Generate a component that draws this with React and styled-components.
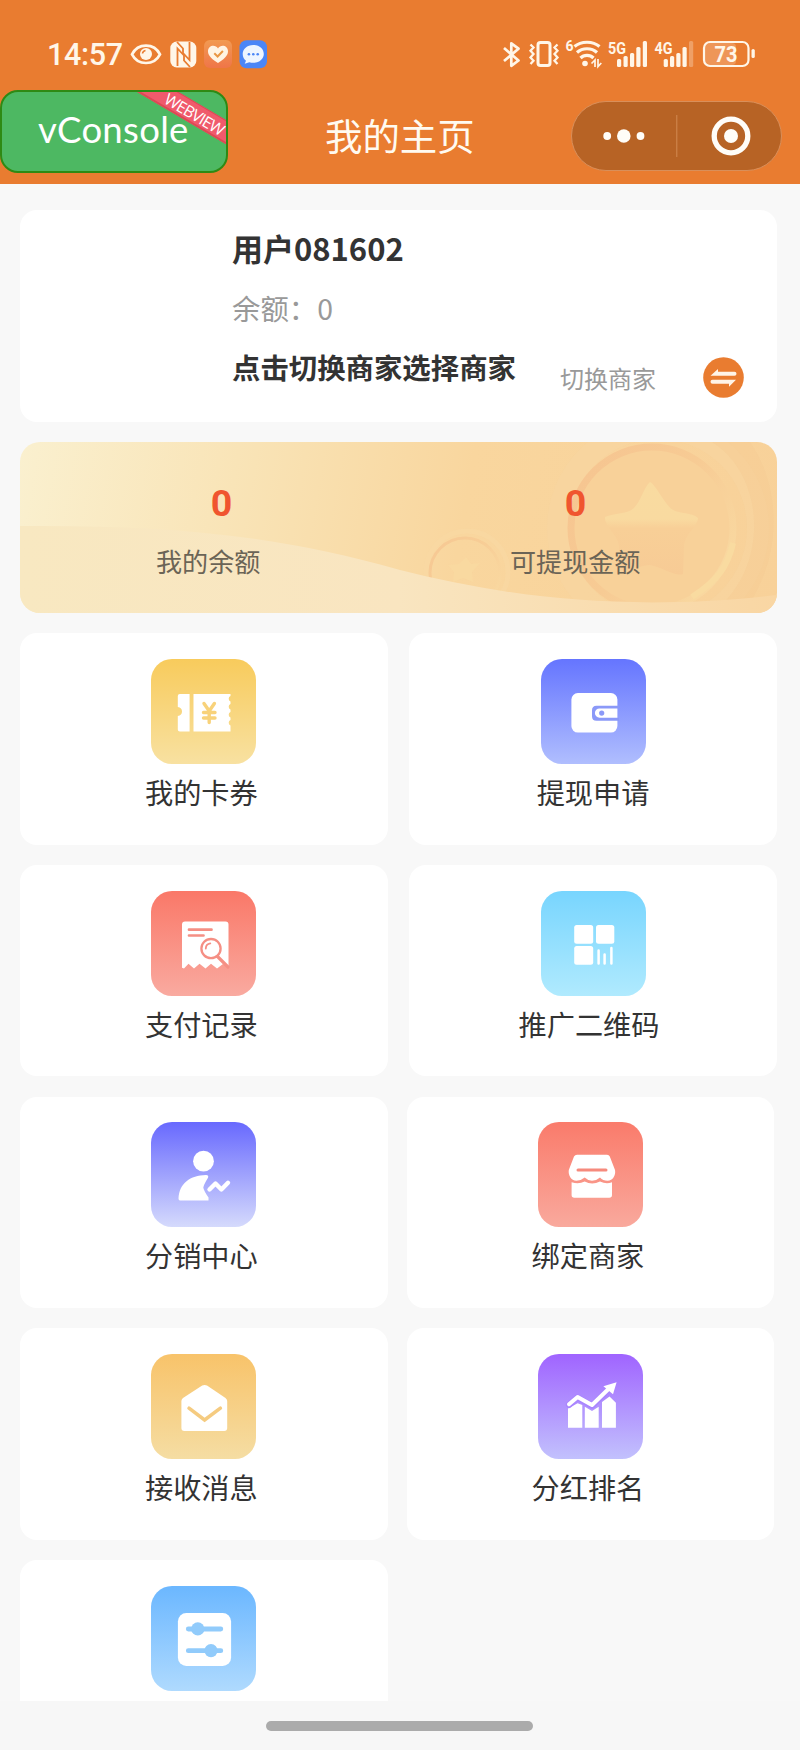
import React from 'react';
import styled, { createGlobalStyle } from 'styled-components';

const GlobalStyle = createGlobalStyle`
  * { box-sizing: border-box; }
  body { margin: 0; background: #f8f8f8; font-family: "Noto Sans CJK SC", sans-serif; color: #333; }
  svg { display: block; flex: none; }
`;

const Screen = styled.div`
  width: 800px;
  height: 1750px;
  overflow: hidden;
  display: flex;
  flex-direction: column;
  background: #f8f8f8;
`;

const Header = styled.header`
  height: 183.5px;
  flex: none;
  background: #e97c30;
`;

const StatusBar = styled.div`
  height: 90px;
  padding: 18px 43px 0 47px;
  display: flex;
  align-items: center;
  justify-content: space-between;
  color: #fff6e8;
`;

const StatusGroup = styled.div`
  display: flex;
  align-items: center;
  gap: 8px;
`;

const Clock = styled.span`
  width: 75px;
  padding-top: 2px;
  font: 500 30.5px/36px Roboto, sans-serif;
  letter-spacing: -0.3px;
  white-space: nowrap;
`;

const NavBar = styled.div`
  height: 93px;
  padding-right: 18.5px;
  display: grid;
  grid-template-columns: 228px 1fr 210px;
  align-items: start;
`;

const ConsoleButton = styled.div`
  position: relative;
  height: 83px;
  border: 2px solid #2e8a14;
  border-radius: 18px;
  overflow: hidden;
  background: #4db862;
  color: #fff;
  font: 400 36.5px/75px Lato, sans-serif;
  padding-left: 36px;
  letter-spacing: 0.3px;
`;

const Ribbon = styled.span`
  position: absolute;
  left: 119px;
  top: 12px;
  width: 150px;
  height: 21px;
  background: #f05a6c;
  border: solid #dc4a55;
  border-width: 1px 0 2px;
  transform: rotate(30.5deg);
  font: 400 16px/20px "Open Sans", sans-serif;
  text-align: center;
  letter-spacing: -0.8px;
  padding-right: 3px;
`;

const Title = styled.h1`
  margin: 0;
  padding-left: 97px;
  font-size: 37.4px;
  font-weight: 400;
  line-height: 90px;
  color: #fffaf0;
  white-space: nowrap;
`;

const Capsule = styled.div`
  margin-top: 11px;
  margin-left: -1px;
  height: 70px;
  border: 1px solid #d98f5a;
  border-radius: 35px;
  background: #b76325;
`;

const Content = styled.main`
  flex: none;
  height: 1517.5px;
  overflow: hidden;
  padding: 26.5px 23px 0 20px;
  display: flex;
  flex-direction: column;
  gap: 20.3px;
`;

const UserCard = styled.section`
  flex: none;
  height: 212px;
  border-radius: 17px;
  background: #fff;
  padding: 16px 33px 0 212px;
  display: flex;
  justify-content: space-between;
`;

const UserInfo = styled.div`
  display: flex;
  flex-direction: column;
  white-space: nowrap;
`;

const UserName = styled.div`
  font-size: 31px;
  font-weight: 700;
  line-height: 44px;
  height: 61px;
`;

const Balance = styled.div`
  font-size: 28.4px;
  line-height: 42px;
  height: 59px;
  color: #999;
`;

const Merchant = styled.div`
  font-size: 28.4px;
  font-weight: 700;
  line-height: 42px;
`;

const SwitchMerchant = styled.div`
  display: flex;
  align-items: center;
  gap: 47px;
  height: 40px;
  margin-top: 132px;
  font-size: 24px;
  line-height: 40px;
  color: #999;
`;

const Banner = styled.section`
  position: relative;
  flex: none;
  height: 170.5px;
  border-radius: 20px;
  overflow: hidden;
  padding: 34px 136px 0;
  display: flex;
  justify-content: space-between;
  background: linear-gradient(100deg, #faf0cf 0%, #f9e4b7 28%, #f9d69e 58%, #f8d199 100%);
`;

const BannerArt = styled.svg`
  position: absolute;
  inset: 0;
`;

const Amount = styled.div`
  position: relative;
  width: 131px;
`;

const AmountValue = styled.div`
  text-align: center;
  font: 700 37.5px/54px Roboto, sans-serif;
  color: #f0552f;
`;

const AmountLabel = styled.div`
  font-size: 26.1px;
  line-height: 38px;
  margin-top: 12px;
  color: #6b6456;
  white-space: nowrap;
`;

const TileRow = styled.div`
  flex: none;
  display: flex;
  gap: ${(p) => p.$gap}px;
`;

const Tile = styled.div`
  width: 367.7px;
  height: 211.5px;
  border-radius: 17px;
  background: #fff;
  padding-top: 25.8px;
  display: flex;
  flex-direction: column;
  align-items: center;
`;

const TileIcon = styled.div`
  width: 105px;
  height: 105px;
  border-radius: 21px;
  background: linear-gradient(${(p) => p.$from}, ${(p) => p.$to});
`;

const TileLabel = styled.div`
  margin-top: 8px;
  padding-right: ${(p) => p.$inset}px;
  font-size: 28.2px;
  line-height: 40px;
`;

const HomeArea = styled.footer`
  flex: 1;
  padding: 20px 0 0 266px;
  background: #f7f7f7;
`;

const HomeIndicator = styled.div`
  width: 266.5px;
  height: 9.5px;
  border-radius: 5px;
  background: #ababab;
`;

const NotificationIcons = () => (
  <svg width="138" height="30" viewBox="130 39 138 30">
    <defs>
      <linearGradient id="heartBg" x1="0" y1="0" x2="0" y2="1">
        <stop offset="0" stopColor="#f29a52" />
        <stop offset="1" stopColor="#ef7548" />
      </linearGradient>
    </defs>
    <path d="M132 54.3C138 42.7 154 42.7 160 54.3C154 65.9 138 65.9 132 54.3Z" fill="none" stroke="#fff6e8" strokeWidth="2.7" />
    <circle cx="146" cy="54" r="6" fill="#fff6e8" />
    <path d="M142.5 53.5a3.6 3.6 0 0 1 3-3" fill="none" stroke="#e97c30" strokeWidth="1.6" />
    <rect x="170.3" y="41.5" width="26" height="26" rx="6.5" fill="#fff6e8" />
    <path d="M177.5 66V48.5L184 55.5V60.5L190 67" fill="none" stroke="#e97c30" strokeWidth="1.8" />
    <path d="M177 42L183 48.5V53L189.5 60V42" fill="none" stroke="#e97c30" strokeWidth="1.8" />
    <rect x="204" y="40" width="28" height="28" rx="6" fill="url(#heartBg)" />
    <path d="M218 63C213 60 208 56 208 51.5C208 45 215.5 44 218 48.5C220.5 44 228 45 228 51.5C228 56 223 60 218 63Z" fill="#fff4e4" />
    <path d="M214.3 53.3l3.3 3.2 5.3-5.5" fill="none" stroke="#e99745" strokeWidth="2" />
    <rect x="239.5" y="40.3" width="27.5" height="28" rx="7" fill="#4b86f7" />
    <path d="M253.3 45C247 45 242.7 49 242.7 54C242.7 57 244 59.3 246 60.8L244.7 63.7L249.3 62.3C257 64.5 263.8 60 263.8 54C263.8 49 259.5 45 253.3 45Z" fill="#eef5ff" />
    <g fill="#4b86f7">
      <circle cx="248.9" cy="54.3" r="1.3" /><circle cx="253.3" cy="54.3" r="1.3" /><circle cx="257.7" cy="54.3" r="1.3" />
    </g>
  </svg>
);

const SystemIcons = () => (
  <svg width="256" height="44" viewBox="501 32 256 44" fill="none" stroke="#fff6e8">
    <path d="M504 48L518.5 60.5L511.3 65.8V43.3L518.5 48.7L504 61" strokeWidth="2.7" strokeLinejoin="round" />
    <rect x="538" y="42.6" width="12" height="23" rx="2.5" strokeWidth="3" />
    <path d="M530.5 44.5l3 3-3 3.3 3 3.3-3 3.3 3 3.3-3 3.3M557.5 44.5l-3 3 3 3.3-3 3.3 3 3.3-3 3.3 3 3.3" strokeWidth="2.3" />
    <path d="M574.5 46.5C581 40.8 593 40.8 599.5 46.5M577 52.5C582.5 47.5 591.5 47.5 597 52.5M580.5 58C584 54.5 590 54.5 593.5 58" strokeWidth="3.2" />
    <circle cx="585" cy="63.5" r="2.8" fill="#fff6e8" stroke="none" />
    <path d="M591.5 63.5L595 60V67M598 59V66.5L601.3 63" strokeWidth="1.7" />
    <g fill="#fff6e8" stroke="none">
      <text x="565.6" y="51" fontFamily="Roboto" fontWeight="700" fontSize="14">6</text>
      <text x="608" y="53.5" fontFamily="Roboto" fontWeight="700" fontSize="16.5" textLength="18" lengthAdjust="spacingAndGlyphs">5G</text>
      <text x="654.5" y="53.5" fontFamily="Roboto" fontWeight="700" fontSize="16.5" textLength="18" lengthAdjust="spacingAndGlyphs">4G</text>
      <rect x="617" y="59" width="4.2" height="8" rx="1.5" />
      <rect x="623.5" y="56" width="4.2" height="11" rx="1.5" />
      <rect x="630" y="53" width="4.2" height="14" rx="1.5" />
      <rect x="636.3" y="47" width="4.2" height="20" rx="1.5" />
      <rect x="642.8" y="41" width="4.2" height="26" rx="1.5" />
      <rect x="663.7" y="59" width="4.2" height="8" rx="1.5" />
      <rect x="670" y="56" width="4.2" height="11" rx="1.5" />
      <rect x="676.3" y="53" width="4.2" height="14" rx="1.5" />
      <rect x="682.5" y="47" width="4.2" height="20" rx="1.5" />
      <rect x="689" y="41" width="4.2" height="26" rx="1.5" opacity=".3" />
      <rect x="705" y="43" width="31" height="22" rx="4" opacity=".22" />
      <rect x="751.5" y="49" width="3.3" height="9" rx="1.6" />
      <text x="714.5" y="61.7" fontFamily="Roboto" fontWeight="700" fontSize="22" textLength="23" lengthAdjust="spacingAndGlyphs">73</text>
    </g>
    <rect x="704" y="42" width="44.5" height="24" rx="6" strokeWidth="2.2" />
  </svg>
);

const CapsuleIcons = () => (
  <svg width="208" height="68" viewBox="571.5 102 208 68">
    <g fill="#fffdf8">
      <circle cx="606.7" cy="136" r="3.9" /><circle cx="623.3" cy="136" r="6.8" /><circle cx="640" cy="136" r="3.9" />
      <circle cx="730.5" cy="136" r="7" />
    </g>
    <path d="M676.3 115V157" stroke="#d28a52" />
    <circle cx="730.5" cy="136" r="16.8" fill="none" stroke="#fffdf8" strokeWidth="5.3" />
  </svg>
);

const SwitchIcon = () => (
  <svg width="41" height="42" viewBox="0 0 41 42">
    <circle cx="20.5" cy="20.5" r="20.3" fill="#e97c30" />
    <g fill="#fff4e8">
      <path d="M7.5 18.8L15 12V14.8H31.5a2 2 0 0 1 0 4Z" />
      <path d="M33 22.7L26 29.8V26.7H9.5a2 2 0 0 1 0-4Z" />
    </g>
  </svg>
);

const CoinArt = () => (
  <BannerArt width="757" height="171" viewBox="20 442 757 171" fill="none">
    <defs>
      <linearGradient id="star" x1="0" y1="0" x2="0" y2="1">
        <stop offset="0" stopColor="#f9dba0" />
        <stop offset=".4" stopColor="#f9daa0" />
        <stop offset=".5" stopColor="#f8cf97" />
        <stop offset="1" stopColor="#f7cb95" />
      </linearGradient>
      <linearGradient id="wave">
        <stop offset="0" stopColor="#f8e8c1" />
        <stop offset=".5" stopColor="#f9e5c0" />
        <stop offset="1" stopColor="#f9d6a3" />
      </linearGradient>
      <linearGradient id="ring" x1="0" y1="0" x2="1" y2=".7">
        <stop offset="0" stopColor="#f6c490" />
        <stop offset=".55" stopColor="#f7cb94" />
        <stop offset="1" stopColor="#f9d8a0" />
      </linearGradient>
    </defs>
    <circle cx="658" cy="528" r="100" stroke="#f8d6a1" strokeWidth="22" opacity=".5" />
    <path d="M712 442C765 475 770 565 716 610L749 604C784 550 779 484 750 442Z" fill="#f6cb94" opacity=".5" />
    <circle cx="652" cy="528" r="81" fill="#f8d199" stroke="url(#ring)" strokeWidth="7" />
    <path d="M692 597C718 580 728 566 733 543" stroke="#f9dba0" strokeWidth="6" />
    <path d="M650 482C656 485 665 505 673 510C680 514 691 512 698 518C698 526 684 535 684 547L683 574C675 577 662 567 650 565C640 565 630 573 620 569L619 545C617 534 604 526 605 517C614 513 628 514 634 508C641 501 644 487 650 482Z" fill="url(#star)" />
    <circle cx="467" cy="572" r="41" stroke="#f8d8a4" strokeWidth="5" opacity=".6" />
    <circle cx="465" cy="573" r="35" stroke="url(#ring)" strokeWidth="3" opacity=".8" />
    <path d="M448 565l11-1 7-7 5 7 9-1-8 9 1 10-10-4-10 4 1-10Z" fill="#f9daa1" opacity=".7" />
    <path d="M20 526C160 525 270 533 400 570C510 598 630 612 777 595V613H20Z" fill="url(#wave)" />
  </BannerArt>
);

const TicketIcon = ({ tint }) => (
  <>
    <path d="M28.8 35H38.6V72.5H28.8Q26.8 72.5 26.8 70.5V57Q31 56.5 31 52.6Q31 48.5 26.8 48V37Q26.8 35 28.8 35Z" />
    <path d="M42.5 35H79.5V37A3 3 0 0 0 79.5 42.5V45A3 3 0 0 0 79.5 50.5V53A3 3 0 0 0 79.5 58.5V61A3 3 0 0 0 79.5 66.5V72.5H42.5Z" />
    <path d="M53 44.5L58.2 52L63.4 44.5M58.2 52V63.5M52.5 53.5H64M52.5 59H64" fill="none" stroke={tint} strokeWidth="3.4" strokeLinecap="round" />
  </>
);

const WalletIcon = ({ tint }) => (
  <>
    <rect x="30.4" y="34" width="46" height="39.6" rx="6.5" />
    <path d="M78 46.7H55.5Q51 46.7 51 51.2V57.2Q51 61.7 55.5 61.7H78V58.7H58.5a4.6 4.6 0 0 1 0-9.2H78Z" fill={tint} />
    <circle cx="60.7" cy="54.1" r="2.6" fill={tint} />
  </>
);

const ReceiptIcon = ({ tint }) => (
  <>
    <path d="M34 30.5H74.5Q77.5 30.5 77.5 33.5V75.5L72 73L66 77.5L60 72.8L54.5 77.5L48.5 72.8L43 77.5L37.5 72.8L33 77.5L31 76.8V33.5Q31 30.5 34 30.5Z" />
    <g fill="none" stroke={tint} strokeLinecap="round">
      <path d="M38 38.7H60.5M38 44.5H52.5" strokeWidth="2.7" />
      <circle cx="60" cy="57.6" r="9.6" strokeWidth="2.3" />
      <path d="M66.5 65.5L77 76" strokeWidth="3.2" />
      <path d="M54.8 57.5Q55 53 59.3 52.4" strokeWidth="1.8" />
    </g>
  </>
);

const QrIcon = () => (
  <>
    <rect x="33.2" y="34" width="19" height="18.7" rx="2.5" />
    <rect x="55" y="34" width="18.3" height="18.7" rx="2.5" />
    <rect x="33.2" y="55" width="19" height="18.7" rx="2.5" />
    <path d="M57.6 59.5V72.5M63.6 63.5V72.5M70.4 57V72.5" stroke="#fff" strokeWidth="2.5" strokeLinecap="round" />
  </>
);

const AgentIcon = () => (
  <>
    <circle cx="52.5" cy="39.2" r="10.4" />
    <path d="M27.5 76.5C28.5 61 39 53.5 55 53Q58 53 57 55.7Q52.5 63 52.3 65.7Q53 69 57.5 75.5V78.5H29Q27.5 78.5 27.5 76.5Z" />
    <path d="M58.5 67.5L64.5 61.5L70.4 67.5L77 60.8" fill="none" stroke="#fff" strokeWidth="4.4" strokeLinecap="round" strokeLinejoin="round" />
  </>
);

const StoreIcon = ({ tint }) => (
  <>
    <path d="M39 32.7H69Q71 32.7 71.8 34.5L77 48C78 53 75 58.7 69.5 58.7Q65 58.7 62 55.5Q58.5 58.7 54 58.7Q50 58.7 46.7 55.5Q43 58.7 38.5 58.7C33 58.7 30 53 30.8 48L36 34.5Q37 32.7 39 32.7Z" />
    <path d="M40 48H68" stroke={tint} strokeWidth="3" strokeLinecap="round" />
    <path d="M33.6 60.3Q41 62.3 46.7 59.5Q54 63.3 62 59.5Q68 62.3 74 60.3V73Q74 75.7 71.3 75.7H36.3Q33.6 75.7 33.6 73Z" />
  </>
);

const MailIcon = ({ tint }) => (
  <>
    <path d="M51.2 31.6Q53.6 30.2 56 31.6L74.5 44Q76.2 45.3 76.2 47V74Q76.2 77 73.2 77H33.4Q30.4 77 30.4 74V47Q30.4 45.3 32 44Z" />
    <path d="M38 54.2L53.6 66L69.4 54.2" fill="none" stroke={tint} strokeWidth="3.5" strokeLinecap="round" />
  </>
);

const RankIcon = () => (
  <>
    <path d="M30 54.5L39.6 49.2L44.3 51V73.7H30ZM46.8 52.7L54 57L60.7 52.7V73.7H46.8ZM64 48L71.5 42.4L77.9 48.7V73.7H64Z" />
    <path d="M31 50.8L39.6 43.5L54 51.7L71.5 34" fill="none" stroke="#a985fe" strokeWidth="6.4" strokeLinecap="round" strokeLinejoin="round" />
    <path d="M31 50.2L39.6 43L54 51L71.5 34" fill="none" stroke="#fff" strokeWidth="4" strokeLinecap="round" strokeLinejoin="round" />
    <path d="M78.6 28.3L65.4 32.3L75 40.3Z" />
  </>
);

const SettingsIcon = ({ tint }) => (
  <>
    <rect x="26.9" y="27" width="53.2" height="53" rx="8.5" />
    <g fill={tint} stroke={tint}>
      <path d="M37.3 43H69.8M37.3 64.7H69.8" strokeWidth="4.8" strokeLinecap="round" />
      <circle cx="46.8" cy="42.9" r="6.6" stroke="none" /><circle cx="60" cy="64.6" r="6.6" stroke="none" />
    </g>
  </>
);

const rows = [
  { gap: 21.5, tiles: [
    { label: '我的卡券', Icon: TicketIcon, from: '#f8cb5c', to: '#f8e1a1', tint: '#f8d27a', inset: 5 },
    { label: '提现申请', Icon: WalletIcon, from: '#6575ff', to: '#b0befe', tint: '#8b99f8', inset: 0 },
  ] },
  { gap: 21.5, tiles: [
    { label: '支付记录', Icon: ReceiptIcon, from: '#fa7868', to: '#f9aaa0', tint: '#f58f84', inset: 5 },
    { label: '推广二维码', Icon: QrIcon, from: '#78d5fe', to: '#b0eafe', inset: 8 },
  ] },
  { gap: 18.9, tiles: [
    { label: '分销中心', Icon: AgentIcon, from: '#6869fe', to: '#d5dafc', inset: 5 },
    { label: '绑定商家', Icon: StoreIcon, from: '#fa7b6b', to: '#f9a99d', tint: '#f68a7d', inset: 5 },
  ] },
  { gap: 18.9, tiles: [
    { label: '接收消息', Icon: MailIcon, from: '#f8c36a', to: '#f5dda3', tint: '#f5cb80', inset: 5 },
    { label: '分红排名', Icon: RankIcon, from: '#a064ff', to: '#c2c1fd', inset: 5 },
  ] },
  { gap: 18.9, tiles: [
    { label: '', Icon: SettingsIcon, from: '#6bb7ff', to: '#afdafe', tint: '#91cbfb', inset: 0 },
  ] },
];

export default function App() {
  return (
    <Screen>
      <GlobalStyle />
      <Header>
        <StatusBar>
          <StatusGroup>
            <Clock>14:57</Clock>
            <NotificationIcons />
          </StatusGroup>
          <SystemIcons />
        </StatusBar>
        <NavBar>
          <ConsoleButton>
            vConsole
            <Ribbon>WEBVIEW</Ribbon>
          </ConsoleButton>
          <Title>我的主页</Title>
          <Capsule><CapsuleIcons /></Capsule>
        </NavBar>
      </Header>
      <Content>
        <UserCard>
          <UserInfo>
            <UserName>用户081602</UserName>
            <Balance>余额：0</Balance>
            <Merchant>点击切换商家选择商家</Merchant>
          </UserInfo>
          <SwitchMerchant>
            切换商家
            <SwitchIcon />
          </SwitchMerchant>
        </UserCard>
        <Banner>
          <CoinArt />
          <Amount>
            <AmountValue>0</AmountValue>
            <AmountLabel>我的余额</AmountLabel>
          </Amount>
          <Amount>
            <AmountValue>0</AmountValue>
            <AmountLabel>可提现金额</AmountLabel>
          </Amount>
        </Banner>
        {rows.map((row, i) => (
          <TileRow key={i} $gap={row.gap}>
            {row.tiles.map(({ label, Icon, from, to, tint, inset }) => (
              <Tile key={from}>
                <TileIcon $from={from} $to={to}>
                  <svg width="105" height="105" viewBox="0 0 105 105" fill="#fff">
                    <Icon tint={tint} />
                  </svg>
                </TileIcon>
                {label && <TileLabel $inset={inset}>{label}</TileLabel>}
              </Tile>
            ))}
          </TileRow>
        ))}
      </Content>
      <HomeArea>
        <HomeIndicator />
      </HomeArea>
    </Screen>
  );
}
